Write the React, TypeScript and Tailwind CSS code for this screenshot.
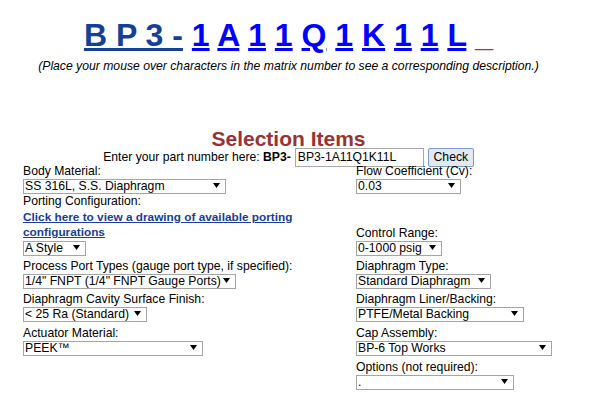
import React, { Fragment } from "react";

function Sel({ w, text }: { w: string; text: string }) {
  return (
    <div
      className={`relative h-[15px] border border-[#a5a5a5] bg-white pl-[1px] text-[12.2px] leading-[13px] text-black ${w}`}
    >
      <span className="whitespace-nowrap">{text}</span>
      <svg
        className="absolute right-[5px] top-[3px]"
        width="7"
        height="5"
        viewBox="0 0 7 5"
      >
        <polygon points="0,0 7,0 3.5,5" fill="#000" />
      </svg>
    </div>
  );
}

function Field({ label, w, text }: { label: string; w: string; text: string }) {
  return (
    <div>
      <div className="leading-[16px]">{label}</div>
      <Sel w={w} text={text} />
    </div>
  );
}

export default function App() {
  const chars = ["1", "A", "1", "1", "Q", "1", "K", "1", "1", "L"];
  return (
    <div className="h-[399px] w-[610px] overflow-hidden bg-white font-['Liberation_Sans',Arial,sans-serif] text-[12.2px] text-black">
      <div className="w-[577px]">
        <div className="pt-[17px] text-center text-[32px] font-bold leading-[36px]">
          <a className="text-[#163f97] underline">B P 3 -</a>{" "}
          {chars.map((c, i) => (
            <Fragment key={i}>
              <a className="text-[#0000ff] underline">{c}</a>{" "}
            </Fragment>
          ))}
          <span className="text-[#a33a3a]">_</span>
        </div>
        <div className="mt-[6px] text-center text-[12.2px] italic leading-[15px]">
          (Place your mouse over characters in the matrix number to see a corresponding description.)
        </div>
        <div className="mt-[54px] text-center text-[21px] font-bold leading-[21px] text-[#993333]">
          Selection Items
        </div>
        <div className="mt-[-1px] flex h-[19px] items-center justify-center">
          <span className="whitespace-pre">Enter your part number here: </span>
          <span className="font-bold">BP3-</span>
          <div className="ml-[4px] flex h-[19px] w-[129px] items-center border border-[#a9a9a9] bg-white pl-[2px] leading-[15px]">
            BP3-1A11Q1K11L
          </div>
          <div className="ml-[4px] flex h-[19px] w-[46px] items-center justify-center rounded-[2px] border border-[#7b9ccc] bg-[#e4e9f0] leading-[15px]">
            Check
          </div>
        </div>

        <div className="mt-[-4px] flex pl-[23px]">
          <div className="w-[333px]">
            <Field label="Body Material:" w="w-[203px]" text="SS 316L, S.S. Diaphragm" />
          </div>
          <div>
            <Field label="Flow Coefficient (Cv):" w="w-[105px]" text="0.03" />
          </div>
        </div>

        <div className="flex items-end pl-[23px]">
          <div className="w-[333px] leading-[15.5px]">
            <div>Porting Configuration:</div>
            <a className="block w-[300px] text-[11.8px] font-bold text-[#163f97] underline">
              Click here to view a drawing of available porting configurations
            </a>
            <Sel w="w-[63px]" text="A Style" />
          </div>
          <div>
            <Field label="Control Range:" w="w-[86px]" text="0-1000 psig" />
          </div>
        </div>

        <div className="mt-[2.5px] flex pl-[23px]">
          <div className="w-[333px]">
            <Field
              label="Process Port Types (gauge port type, if specified):"
              w="w-[213px]"
              text={'1/4" FNPT (1/4" FNPT Gauge Ports)'}
            />
          </div>
          <div>
            <Field label="Diaphragm Type:" w="w-[135px]" text="Standard Diaphragm" />
          </div>
        </div>

        <div className="mt-[2.3px] flex pl-[23px]">
          <div className="w-[333px]">
            <Field label="Diaphragm Cavity Surface Finish:" w="w-[124px]" text="< 25 Ra (Standard)" />
          </div>
          <div>
            <Field label="Diaphragm Liner/Backing:" w="w-[168px]" text="PTFE/Metal Backing" />
          </div>
        </div>

        <div className="mt-[3px] flex pl-[23px]">
          <div className="w-[333px]">
            <Field label="Actuator Material:" w="w-[180px]" text="PEEK™" />
          </div>
          <div>
            <Field label="Cap Assembly:" w="w-[196px]" text="BP-6 Top Works" />
          </div>
        </div>

        <div className="mt-[2.3px] flex pl-[23px]">
          <div className="w-[333px]" />
          <div>
            <Field label="Options (not required):" w="w-[158px]" text="." />
          </div>
        </div>
      </div>
    </div>
  );
}
